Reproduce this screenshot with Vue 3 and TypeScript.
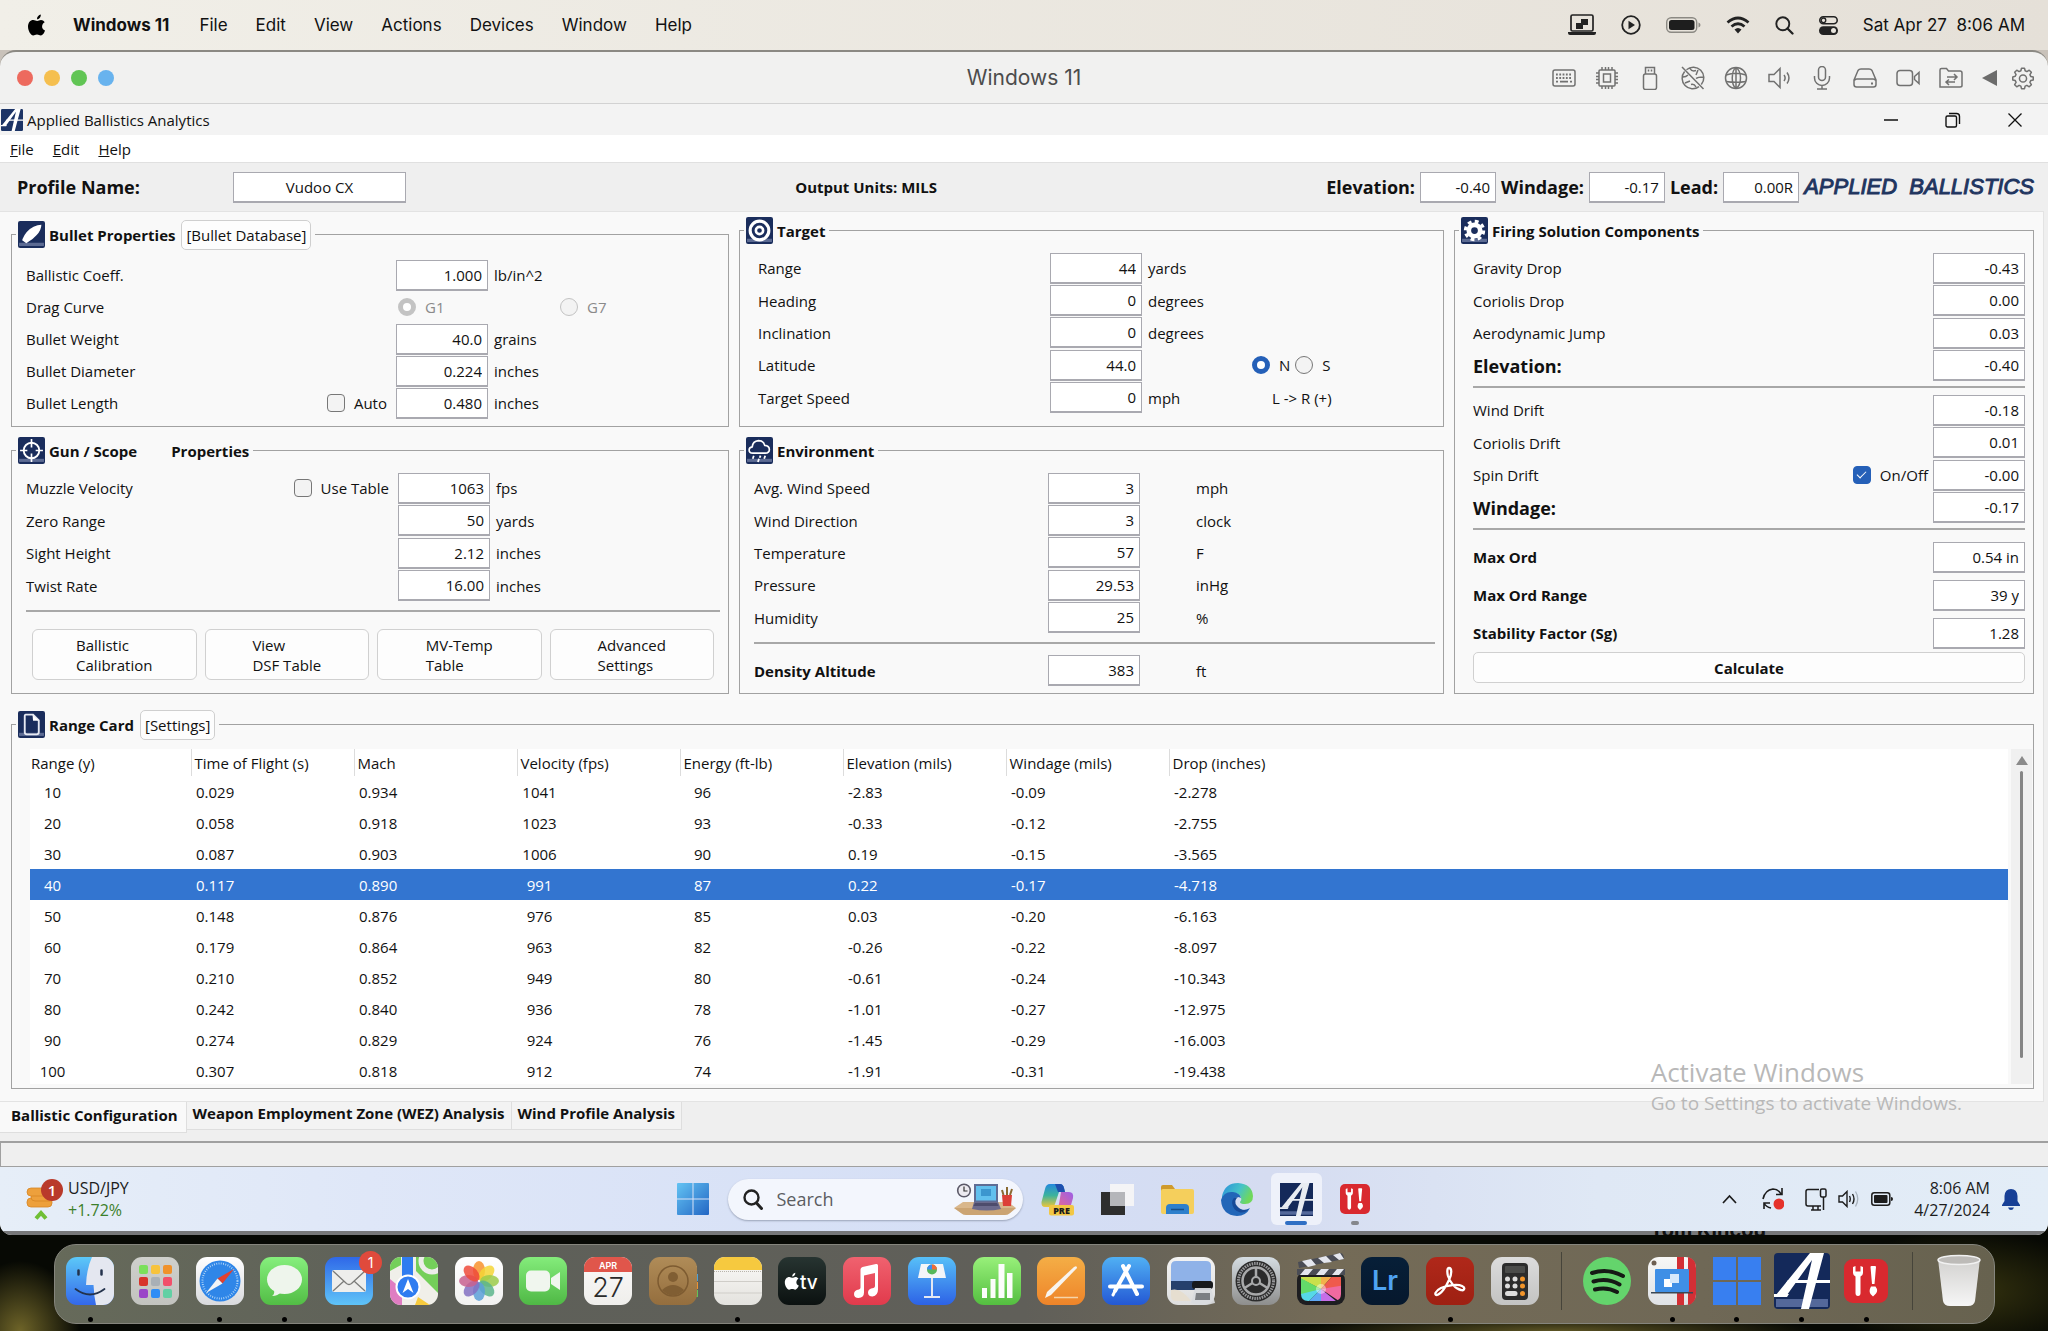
<script setup lang="ts">
import { reactive, ref } from 'vue'

interface Field {
  id: string
  label: string
  value: string
  unit?: string
  strong?: boolean
  large?: boolean
  check?: string
  checked?: boolean
}

const macMenus = ['File', 'Edit', 'View', 'Actions', 'Devices', 'Window', 'Help']
const appMenus = ['File', 'Edit', 'Help']

const profileName = ref('Vudoo CX')
const summary = reactive([
  { id: 'sum-elev', label: 'Elevation:', value: '-0.40' },
  { id: 'sum-wind', label: 'Windage:', value: '-0.17' },
  { id: 'sum-lead', label: 'Lead:', value: '0.00R' },
])

const coeff = ref('1.000')
const bullet = reactive<Field[]>([
  { id: 'b-weight', label: 'Bullet Weight', value: '40.0', unit: 'grains' },
  { id: 'b-diameter', label: 'Bullet Diameter', value: '0.224', unit: 'inches' },
  { id: 'b-length', label: 'Bullet Length', value: '0.480', unit: 'inches', check: 'Auto', checked: false },
])
const gun = reactive<Field[]>([
  { id: 'g-mv', label: 'Muzzle Velocity', value: '1063', unit: 'fps', check: 'Use Table', checked: false },
  { id: 'g-zero', label: 'Zero Range', value: '50', unit: 'yards' },
  { id: 'g-sight', label: 'Sight Height', value: '2.12', unit: 'inches' },
  { id: 'g-twist', label: 'Twist Rate', value: '16.00', unit: 'inches' },
])
const gunButtons = [
  ['Ballistic', 'Calibration'],
  ['View', 'DSF Table'],
  ['MV-Temp', 'Table'],
  ['Advanced', 'Settings'],
]
const target = reactive<Field[]>([
  { id: 't-range', label: 'Range', value: '44', unit: 'yards' },
  { id: 't-heading', label: 'Heading', value: '0', unit: 'degrees' },
  { id: 't-incl', label: 'Inclination', value: '0', unit: 'degrees' },
  { id: 't-lat', label: 'Latitude', value: '44.0', unit: '' },
  { id: 't-speed', label: 'Target Speed', value: '0', unit: 'mph' },
])
const hemisphere = ref('N')
const dragCurve = ref('G1')
const environment = reactive<Field[]>([
  { id: 'e-speed', label: 'Avg. Wind Speed', value: '3', unit: 'mph' },
  { id: 'e-dir', label: 'Wind Direction', value: '3', unit: 'clock' },
  { id: 'e-temp', label: 'Temperature', value: '57', unit: 'F' },
  { id: 'e-press', label: 'Pressure', value: '29.53', unit: 'inHg' },
  { id: 'e-hum', label: 'Humidity', value: '25', unit: '%' },
])
const density = ref('383')
const solution = reactive<{ rows: Field[] }[]>([
  {
    rows: [
      { id: 's-gd', label: 'Gravity Drop', value: '-0.43' },
      { id: 's-cd', label: 'Coriolis Drop', value: '0.00' },
      { id: 's-aj', label: 'Aerodynamic Jump', value: '0.03' },
      { id: 's-el', label: 'Elevation:', value: '-0.40', large: true },
    ],
  },
  {
    rows: [
      { id: 's-wd', label: 'Wind Drift', value: '-0.18' },
      { id: 's-cr', label: 'Coriolis Drift', value: '0.01' },
      { id: 's-sd', label: 'Spin Drift', value: '-0.00', check: 'On/Off', checked: true },
      { id: 's-wi', label: 'Windage:', value: '-0.17', large: true },
    ],
  },
  {
    rows: [
      { id: 's-mo', label: 'Max Ord', value: '0.54 in', strong: true },
      { id: 's-mr', label: 'Max Ord Range', value: '39 y', strong: true },
      { id: 's-sg', label: 'Stability Factor (Sg)', value: '1.28', strong: true },
    ],
  },
])

const columns = ['Range (y)', 'Time of Flight (s)', 'Mach', 'Velocity (fps)', 'Energy (ft-lb)', 'Elevation (mils)', 'Windage (mils)', 'Drop (inches)']
const centred = [0, 3, 4]
const card = [
  ['10', '0.029', '0.934', '1041', '96', '-2.83', '-0.09', '-2.278'],
  ['20', '0.058', '0.918', '1023', '93', '-0.33', '-0.12', '-2.755'],
  ['30', '0.087', '0.903', '1006', '90', '0.19', '-0.15', '-3.565'],
  ['40', '0.117', '0.890', '991', '87', '0.22', '-0.17', '-4.718'],
  ['50', '0.148', '0.876', '976', '85', '0.03', '-0.20', '-6.163'],
  ['60', '0.179', '0.864', '963', '82', '-0.26', '-0.22', '-8.097'],
  ['70', '0.210', '0.852', '949', '80', '-0.61', '-0.24', '-10.343'],
  ['80', '0.242', '0.840', '936', '78', '-1.01', '-0.27', '-12.975'],
  ['90', '0.274', '0.829', '924', '76', '-1.45', '-0.29', '-16.003'],
  ['100', '0.307', '0.818', '912', '74', '-1.91', '-0.31', '-19.438'],
]
const selected = ref('40')

const tabs = ['Ballistic Configuration', 'Weapon Employment Zone (WEZ) Analysis', 'Wind Profile Analysis']
const activeTab = ref(0)

/* artwork on a 24 unit grid for the virtual machine toolbar */
const vmTools = [
  { name: 'Keyboard', art: '<rect x="1" y="4" width="22" height="16" rx="2"/><path d="M4 8.500h16M4 12h16" stroke-dasharray="1.800 1.500" stroke-width="2"/><path d="M4 15.700h2M8 15.700h8M18 15.700h2" stroke-width="1.800"/>' },
  { name: 'Processor', art: '<rect x="4" y="4" width="16" height="16" rx="1"/><rect x="8.500" y="8" width="7" height="8"/><path d="M7 1v3M10.500 1v3M13.500 1v3M17 1v3M7 20v3M10.500 20v3M13.500 20v3M17 20v3M1 7h3M1 10.500h3M1 13.500h3M1 17h3M20 7h3M20 10.500h3M20 13.500h3M20 17h3"/>' },
  { name: 'USB', art: '<rect x="5.500" y="8" width="13" height="15.500" rx="2"/><path d="M7.500 8V1.500h9V8M10.500 3.500v2M13.500 3.500v2"/>' },
  { name: 'Disc', art: '<path d="M5.500 3.700A10.500 10.500 0 0 1 20.300 18.500M18 20.700A10.500 10.500 0 0 1 3.600 5.600M1 1l21.500 22M2 11c3 0 4-1 5-2M9 2.500c1 2 3 3 6 2M22 11c-3 0-5 0-7 1.500M15 21c-1-2-3-3-5-2.500M17 4l-2 5M4 17l5-2"/>' },
  { name: 'Network', art: '<circle cx="12" cy="12" r="10.500"/><path d="M12 1.500C7 5 7 19 12 22.500M12 1.500c6 4 6 17 0 21M2 9c6-2 14-2 20 0M2 15.500c6 1 14 1 20 0M12 1.500v21"/>' },
  { name: 'Sound', art: '<path d="M2 8.500h5l6-6v19l-6-6H2zM17 9c1.500 2 1.500 4 0 6M20 6.500c2.500 3.500 2.500 7.500 0 11"/>' },
  { name: 'Microphone', art: '<rect x="8.500" y="0.500" width="7" height="14" rx="3.500"/><path d="M4.500 10v2a7.500 7.500 0 0 0 15 0v-2M12 19.500v3.500M7 23h10"/>' },
  { name: 'Disk', art: '<path d="M1 14L5 4.500Q6 3 8 3h8q2 0 3 1.500L23 14v4.500q0 2.500-2.500 2.500h-17Q1 21 1 18.500zM1.500 14.500Q2 13 4 13h16q2 0 2.500 1.500"/><path d="M18 17.500h2" stroke-width="2"/>' },
  { name: 'Camera', art: '<rect x="1" y="4.500" width="15.500" height="15" rx="3"/><path d="M18.500 10.500l4.500-4v11l-4.500-4z"/>' },
  { name: 'Shared folders', art: '<path d="M1 21V4q0-1.500 1.500-1.500h5L9.500 5H21q2 0 2 2v12.500q0 1.500-2 1.500zM8 11h10M15 8l3 3-3 3M16 16H7M10 13.500L7 16l3 3"/>' },
]

const gearTeeth = 'M10.300 1.500h3.400l.7 2.900 2 .9 2.600-1.600 2.400 2.400-1.600 2.600.9 2 2.800.7v3.300l-2.800.7-.9 2 1.600 2.600-2.400 2.400-2.600-1.600-2 .9-.7 2.800h-3.400l-.7-2.800-2-.9L5 22.400 2.600 20l1.600-2.600-.9-2-2.800-.7v-3.400l2.800-.7.9-2L2.600 6 5 3.700l2.600 1.600 2-.9z'

const letterA = '<path d="M2 42 36 0h14L35 56h-8L38 7 13 42z"/><path d="M14 27h42v3H12z"/><path d="M0 41h15l-2 3H0z"/>'

const grad = (id: string, a: string, b: string) =>
  `<linearGradient id="${id}" x1="0" y1="0" x2="0" y2="1"><stop offset="0" stop-color="${a}"/><stop offset="1" stop-color="${b}"/></linearGradient>`
const tile = (id: string, a: string, b: string) =>
  `${grad(id, a, b)}<rect width="48" height="48" rx="11" fill="url(#${id})"/>`

const padColors = ['#7be05a', '#f7c33c', '#f0922b', '#d8332a', '#a9b0b6', '#f2506a', '#9a45c8', '#2f8df5', '#62d0a4']
const launchpad = padColors
  .map((c, i) => `<rect x="${8 + (i % 3) * 12}" y="${8 + Math.floor(i / 3) * 12}" width="9" height="9" rx="2" fill="${c}"/>`)
  .join('')
const petalColors = ['#f8922d', '#f4d536', '#9ccb4a', '#5cb58c', '#5b9fd8', '#8270c2', '#c8608f', '#ef4a3a']
const petals = petalColors
  .map((c, i) => `<ellipse cx="24" cy="13.500" rx="6" ry="9.500" fill="${c}" opacity=".85" transform="rotate(${i * 45} 24 24)"/>`)
  .join('')
const toolsArt = '<path d="M11 10v6q0 2 2.500 3.500V36q0 3 2.500 3t2.500-3V19.500Q21 18 21 16v-6l-2.500-1v5.500h-5V9z" fill="#fff"/><path d="M28.500 10q0-1 1-1h3.500q1 0 1 1l-1.500 17h-2.500zM29 29.500h4.500q3 4 .5 7l-3 3-2.500-2.500q-2-3 .5-7.500z" fill="#fff"/>'
const tickMarks = '<circle cx="24" cy="24" r="17.500" fill="none" stroke="#bcdcf8" stroke-width="2" stroke-dasharray=".8 1.500"/>'

interface DockItem {
  name: string
  art: string
  running?: boolean
  badge?: string
  size?: string
}
const dock: DockItem[] = [
  { name: 'Finder', running: true, art: tile('fi', '#5cc8f8', '#3468ea') + '<path d="M26 0h11a11 11 0 0 1 11 11v26a11 11 0 0 1-11 11h-7q-2-9-2.500-20H20Q20.500 12 26 0z" fill="#e4e7f0"/><path d="M12.500 13.500v4M35.500 13.500v4" stroke="#23324c" stroke-width="2.500" stroke-linecap="round"/><path d="M9.500 32q14.500 11 29 0" fill="none" stroke="#23324c" stroke-width="1.800" stroke-linecap="round"/>' },
  { name: 'Launchpad', art: tile('la', '#cfd0cc', '#c2c3bf') + launchpad },
  { name: 'Safari', running: true, art: tile('sa', '#ffffff', '#d9dadd') + '<circle cx="24" cy="24" r="20.500" fill="#2f86e8"/>' + tickMarks + '<path d="M38 12 26.500 26.500 21.500 21.500z" fill="#e2402f"/><path d="M10 36 21.500 21.500 26.500 26.500z" fill="#f2f4f6"/>' },
  { name: 'Messages', running: true, art: tile('me', '#86ef7d', '#52bd45') + '<ellipse cx="24.500" cy="22.500" rx="17.500" ry="14.500" fill="#eef5ec"/><path d="M14 33q1 4-2 6 6 0 9-4z" fill="#eef5ec"/>' },
  { name: 'Mail', running: true, badge: '1', art: tile('ma', '#2f68e8', '#5fc4f8') + '<rect x="7" y="13" width="34" height="22" rx="2" fill="#eeeeec"/><path d="M8 14l13.500 12.500q2.500 2 5 0L40 14M8 34l11-10M40 34L29 24" fill="none" stroke="#7c7c7a" stroke-width="1.300"/>' },
  { name: 'Maps', art: '<clipPath id="mc"><rect width="48" height="48" rx="11"/></clipPath><g clip-path="url(#mc)"><rect width="48" height="48" fill="#f0efe9"/><path d="M0 0h11v8L0 14zM26 0h22v36L26 14z" fill="#74cf5a"/><path d="M12 0h11v26H12z" fill="#2f7cf0"/><path d="M0 22l12 10v16H0z" fill="#df7dc2"/><path d="M28 40l12 8H25z" fill="#f7cb3e"/><circle cx="42" cy="4" r="11" fill="none" stroke="#ececea" stroke-width="5"/></g><circle cx="18" cy="30" r="11.500" fill="#2f7cf0" stroke="#fff" stroke-width="2"/><path d="M18 22l5.500 14-5.500-4-5.500 4z" fill="#fff"/>' },
  { name: 'Photos', art: tile('ph', '#ffffff', '#f1f1f0') + petals },
  { name: 'FaceTime', art: tile('fa', '#84ec7b', '#4fb845') + '<rect x="7" y="13.500" width="24" height="21" rx="5" fill="#f0f6ee"/><path d="M32 21l9-6v18l-9-6z" fill="#f0f6ee"/>' },
  { name: 'Calendar', art: tile('ca', '#fbfaf9', '#efeeeb') + '<path d="M11 0h26a11 11 0 0 1 11 11v4H0v-4A11 11 0 0 1 11 0z" fill="#e0564b"/><text x="24" y="11.500" text-anchor="middle" font-size="9" font-weight="600" fill="#fff">APR</text><text x="24" y="40" text-anchor="middle" font-size="27" fill="#2a2a2a" font-weight="300">27</text>' },
  { name: 'Contacts', art: '<path d="M44 9h4v7h-4z" fill="#d4d4d4"/><path d="M44 17h5v7h-5z" fill="#4ea2d8"/><path d="M44 25h5v7h-5z" fill="#ee9333"/><path d="M44 33h5v7h-5z" fill="#63c35a"/>' + tile('co', '#b08c58', '#946e3e') + '<circle cx="24" cy="24" r="15" fill="none" stroke="#7d5b31" stroke-width="1.500"/><circle cx="24" cy="20" r="5" fill="#805e33"/><path d="M13 33q11-10 22 0-11 11-22 0z" fill="#805e33"/>' },
  { name: 'Notes', running: true, art: tile('no', '#fbfaf8', '#e3e2de') + '<path d="M11 0h26a11 11 0 0 1 11 11v2H0v-2A11 11 0 0 1 11 0z" fill="#f6c93f"/><path d="M0 24.500h48M0 36h48" stroke="#cfcdc8"/><path d="M0 14.500h48" stroke="#b8b4ab" stroke-dasharray="1 1"/>' },
  { name: 'TV', art: tile('tv', '#273431', '#0b1110') + '<path transform="translate(6 15) scale(.82)" d="M14 6c-1.600 0-2.500 1-3.500 1S8 6 6.500 6C3.500 6 1 8.700 1 12.500 1 17 4 21.500 6.200 21.500c1.400 0 2-.9 3.800-.9s2.300.9 3.800.9c2 0 3.700-3 4.200-4.900-4-1.700-3.600-6.800-.3-8.400C16.700 6.700 15.400 6 14 6zM10 5.500C9.800 3 11.700 1 13.800.8 14 3.400 12 5.500 10 5.500z" fill="#fff"/><text x="22" y="32" font-size="19" font-weight="500" fill="#fff">tv</text>' },
  { name: 'Music', art: tile('mu', '#f0626f', '#e13a4c') + '<path d="M17.500 12.500q0-2 2-2.500l13.500-3q2-.5 2 1.500v24q0 6-5.500 7-4.500 0-4.500-4t5.500-4.500q1.500-.5 1.500-2V16l-11 2.500v17q0 5-5.500 5.500-4.500 0-4.500-4t5-4.500q1.500-.5 1.500-2z" fill="#fff"/>' },
  { name: 'Keynote', art: tile('ke', '#57c0f8', '#2d62e6') + '<path d="M13 7h22l3 14H10z" fill="#f3f5f8"/><circle cx="24" cy="12.500" r="5" fill="#55b85a"/><path d="M24 12.500v-5a5 5 0 0 1 5 5z" fill="#ef6a3a"/><path d="M24 12.500h-5a5 5 0 0 1 5-5z" fill="#3a8df0"/><path d="M23 21h2v18h-2zM16 39h16v2H16z" fill="#e3e8f2"/>' },
  { name: 'Numbers', art: tile('nu', '#98f07a', '#54be40') + '<path d="M9 31h5v10H9zM17.500 22h5v19h-5zM25.500 7h6v34h-6zM34 16h5.500v25H34z" fill="#fbfdfa"/>' },
  { name: 'Pages', art: tile('pa', '#f4ae46', '#ee8429') + '<path d="M37 10q3-2 3 1L14 38l-6 3 2-6z" fill="#f8f4ee"/><path d="M17 40.500h24" stroke="#f6d4a8" stroke-width="1.500"/>' },
  { name: 'App Store', art: tile('as', '#50b0f4', '#2458d4') + '<path d="M21 9l14 28M27 9L13 34M8 29.500h32" stroke="#fff" stroke-width="4" stroke-linecap="round"/><path d="M12 36l-1 2" stroke="#fff" stroke-width="3" stroke-linecap="round"/>' },
  { name: 'Preview', art: tile('pr', '#f3f3f3', '#dedede') + '<path d="M9 4h30q5 0 5 5v16H4V9q0-5 5-5z" fill="#8fb2e8"/><path d="M4 24h40v9H4z" fill="#26406c"/><path d="M4 33q10-3 20 11H9q-5 0-5-5z" fill="#e6ded0"/><rect x="25" y="24" width="21" height="8" rx="3" fill="#17191c"/><path d="M28 31h16l4 15q-12 4-24 0z" fill="#d9dcdf" opacity=".93"/><path d="M29 36h14v7H28z" fill="#7d8084"/>' },
  { name: 'System Settings', art: tile('ss', '#d5dde2', '#8e8e8d') + '<circle cx="24" cy="24" r="20.500" fill="#2b2b2b"/><circle cx="24" cy="24" r="17.500" fill="none" stroke="#97989a" stroke-width="3" stroke-dasharray="1.500 1"/><circle cx="24" cy="24" r="13.500" fill="none" stroke="#a8a9aa" stroke-width="2.500"/><circle cx="24" cy="24" r="4" fill="none" stroke="#a8a9aa" stroke-width="2"/><path d="M24 20V11M27.500 26l8 5M20.500 26l-8 5" stroke="#a8a9aa" stroke-width="2.500"/>' },
  { name: 'Final Cut Pro', art: '<rect y="14" width="48" height="34" rx="9" fill="#1d1d20"/><clipPath id="fc"><path d="M4 20h40v17q0 7-7 7H11q-7 0-7-7z"/></clipPath><g clip-path="url(#fc)"><path d="M24 32L0 20v-4h24z" fill="#c9e04c"/><path d="M24 32V16h14z" fill="#f2b04a"/><path d="M24 32L38 16h10v14z" fill="#ef5a4c"/><path d="M24 32l24-4v20z" fill="#f06aa0"/><path d="M24 32l20 16H24z" fill="#c66ee8"/><path d="M24 32v16H8z" fill="#5fa8f4"/><path d="M24 32L8 48H0V36z" fill="#56d8e8"/><path d="M24 32L0 38V19z" fill="#63db6a"/><circle cx="24" cy="32" r="5" fill="#fff" opacity=".45"/></g><path d="M0 12h48v6H0z" fill="#4a4c55"/><path d="M3 18l5-6h8l-5 6zM19 18l5-6h8l-5 6zM35 18l5-6h7l-5 6z" fill="#e5e7ee"/><path d="M1 5L44-4q3 1 3 6L2 11z" fill="#4a4c55"/><path d="M5 4l9-2 5 6-8 2zM21 1l8-2 6 6-8 1zM36-2l7-2 4 6-5 1z" fill="#e5e7ee"/>' },
  { name: 'Lightroom', art: tile('lr', '#071f38', '#06182d') + '<text x="24" y="33" text-anchor="middle" font-size="27" font-weight="600" fill="#4fa3f2">Lr</text>' },
  { name: 'Acrobat', running: true, art: tile('ac', '#b0281a', '#9e2012') + '<path d="M23 11c3 0 3 6 0 12-3 7-8 14-12 15-3 0-2-4 4-7 7-3 17-4 21-2 4 2 2 5-1 4-6-1-11-8-13-14-1-4-1-8 1-8z" fill="none" stroke="#fff" stroke-width="2.300"/>' },
  { name: 'Calculator', art: tile('cl', '#dcdcdc', '#c3c3c2') + '<rect x="11" y="6" width="26" height="37" rx="4" fill="#2c2c2c"/><rect x="14" y="9" width="20" height="7" rx="1" fill="#4b4c4a"/><g fill="#ddd"><circle cx="16.500" cy="22" r="2.500"/><circle cx="24" cy="22" r="2.500"/><circle cx="16.500" cy="29" r="2.500"/><circle cx="24" cy="29" r="2.500"/><rect x="14" y="34" width="12.500" height="5" rx="2.500"/></g><g fill="#f2952b"><circle cx="31.500" cy="22" r="2.500"/><circle cx="31.500" cy="29" r="2.500"/><circle cx="31.500" cy="36.500" r="2.500"/></g>' },
  { name: 'separator', art: '' },
  { name: 'Spotify', art: '<circle cx="24" cy="24" r="24" fill="#64d46c"/><path d="M9 16q16-5 31 3M10.500 24.500q14-4 26 3M12 32.500q12-3 22 2.500" fill="none" stroke="#151a15" stroke-width="4" stroke-linecap="round"/>' },
  { name: 'Parallels', running: true, art: tile('pl', '#f7f7f6', '#dfe2e6') + '<path d="M29 0h7v48h-7zM40 0q8 2 8 11v26q0 9-8 11z" fill="#d32f35"/><circle cx="6" cy="6" r="2.500" fill="#6d5f52"/><rect x="7" y="12" width="34" height="23" rx="1" fill="#3f8fe6"/><path d="M3 35h42v1.500H3z" fill="#3b4754"/><rect x="16" y="22" width="8" height="8" fill="#fff"/><rect x="22" y="17" width="9" height="9" fill="#d6e8fb"/>' },
  { name: 'Windows 11', running: true, art: '<path d="M0 0h23v23H0zM25 0h23v23H25zM0 25h23v23H0zM25 25h23v23H25z" fill="#387ff0"/>' },
  { name: 'Applied Ballistics', running: true, size: 'big', art: `<g transform="scale(.857)"><rect width="56" height="56" rx="4" fill="#14295a"/><path d="M2 46h52v8H2z" fill="#54689a"/><g fill="#fff">${letterA}</g></g>` },
  { name: 'Parallels Toolbox', running: true, art: '<rect x="2" y="2" width="44" height="44" rx="9" fill="#d9292f"/>' + toolsArt },
  { name: 'separator', art: '' },
  { name: 'Trash', art: grad('tr', '#d2d1cf', '#f6f6f6') + '<path d="M3 2h42l-5 42q-1 5-7 5H15q-6 0-7-5z" fill="url(#tr)"/><ellipse cx="24" cy="3" rx="21" ry="4.500" fill="#bdbbb8" stroke="#f1f1f1" stroke-width="1.500"/>' },
]
</script>

<template>
  <div class="desktop">
    <header class="mac-bar">
      <svg class="apple" viewBox="0 0 19 22"><path d="M14 6c-1.600 0-2.500 1-3.800 1S7.800 6 6.300 6C3.300 6 1 8.700 1 12.500 1 17 4 21.500 6.200 21.500c1.400 0 2-.9 3.800-.9s2.300.9 3.800.9c2 0 3.700-3 4.200-4.900-4-1.700-3.600-6.800-.3-8.400C16.700 6.700 15.400 6 14 6zM10 5.300C9.800 3 11.700.8 13.800.5 14 3.200 12 5.300 10 5.300z" fill="#000" /></svg>
      <b>Windows 11</b>
      <nav class="mac-menus"><a v-for="m in macMenus" :key="m" href="#">{{ m }}</a></nav>
      <div class="mac-status">
        <svg width="28" height="22" viewBox="0 0 28 22"><rect x="3" y="1" width="22" height="16" rx="1.500" fill="none" stroke="#222" stroke-width="1.700" /><path d="M0 18h28v1q0 2-2 2H2q-2 0-2-2zM8 9h7v6H8zM13 5h7v6h-7z" fill="#222" /></svg>
        <svg width="20" height="20" viewBox="0 0 20 20"><circle cx="10" cy="10" r="8.800" fill="none" stroke="#222" stroke-width="1.800" /><path d="M7.500 5.800l6.500 4.200-6.500 4.200z" fill="#222" /></svg>
        <svg width="35" height="16" viewBox="0 0 35 16"><rect x=".7" y=".7" width="30" height="14.600" rx="4.500" fill="none" stroke="#8b8983" stroke-width="1.400" /><rect x="3" y="3" width="25.500" height="10" rx="2.500" fill="#1e1e1e" /><path d="M32.500 5.500q2 .8 2 2.500t-2 2.500z" fill="#8b8983" /></svg>
        <svg width="24" height="18" viewBox="0 0 24 18"><path d="M1.500 6.500Q12-2.500 22.500 6.500M5.500 10.500q6.500-5.500 13 0" fill="none" stroke="#222" stroke-width="2.800" /><path d="M8.500 13.500q3.500-3 7 0L12 17.500z" fill="#222" /></svg>
        <svg width="19" height="19" viewBox="0 0 19 19"><circle cx="7.800" cy="7.800" r="6.500" fill="none" stroke="#222" stroke-width="1.900" /><path d="M12.500 12.500l5 5" stroke="#222" stroke-width="2.300" stroke-linecap="round" /></svg>
        <svg width="19" height="19" viewBox="0 0 19 19"><rect x=".8" y=".8" width="17.400" height="7" rx="3.500" fill="none" stroke="#222" stroke-width="1.600" /><circle cx="4.500" cy="4.300" r="2.300" fill="none" stroke="#222" stroke-width="1.300" /><rect x="0" y="10.300" width="19" height="8.700" rx="4.300" fill="#222" /><circle cx="14.500" cy="14.600" r="2.500" fill="#e8e5de" /></svg>
        <span class="clock">Sat Apr 27&nbsp; 8:06 AM</span>
      </div>
    </header>

    <main class="vm">
      <div class="vm-bar">
        <div class="lights"><button v-for="c in ['close', 'minimise', 'zoom', 'coherence']" :key="c" :class="c" :aria-label="c"></button></div>
        <span class="vm-title">Windows 11</span>
        <div class="vm-tools">
          <button v-for="t in vmTools" :key="t.name" class="bare" :aria-label="t.name"><svg width="24" height="24" viewBox="0 0 24 24" fill="none" stroke="#717170" stroke-width="1.500" v-html="t.art"></svg></button>
          <button class="bare collapse" aria-label="Collapse"><svg width="15" height="16" viewBox="0 0 15 16"><path d="M0 8L15 0v16z" fill="#6c6c6b" /></svg></button>
          <button class="bare" aria-label="Settings"><svg width="24" height="24" viewBox="-1 -1 26 27" fill="none" stroke="#717170" stroke-width="1.700" stroke-linejoin="round"><path :d="gearTeeth" /><circle cx="12" cy="13" r="4" /></svg></button>
        </div>
      </div>

      <div class="app">
        <div class="title-bar">
          <svg width="22" height="22" viewBox="0 0 56 56"><rect width="56" height="56" rx="3" fill="#1c3466" /><g fill="#fff" v-html="letterA"></g></svg>
          <span>Applied Ballistics Analytics</span>
          <div class="win-buttons">
            <button class="bare" aria-label="Minimize"><svg width="16" height="16" viewBox="0 0 16 16"><path d="M1 8h14" stroke="#111" stroke-width="1.500" /></svg></button>
            <button class="bare" aria-label="Restore"><svg width="16" height="16" viewBox="0 0 16 16" fill="none" stroke="#111" stroke-width="1.400"><rect x="1" y="4" width="10.500" height="11" rx="1.500" /><path d="M4 1.500h7.500q3 0 3 3V12" /></svg></button>
            <button class="bare" aria-label="Close"><svg width="16" height="16" viewBox="0 0 16 16"><path d="M1.500 1.500l13 13M14.500 1.500l-13 13" stroke="#111" stroke-width="1.300" /></svg></button>
          </div>
        </div>
        <nav class="menu-bar"><a v-for="m in appMenus" :key="m" href="#"><u>{{ m[0] }}</u>{{ m.slice(1) }}</a></nav>

        <div class="profile">
          <label class="large" for="profile">Profile Name:</label>
          <input id="profile" v-model="profileName" class="name-box" type="text" />
          <strong class="units">Output Units: MILS</strong>
          <div class="summary">
            <template v-for="s in summary" :key="s.id">
              <label class="large" :for="s.id">{{ s.label }}</label>
              <input :id="s.id" v-model="s.value" type="text" />
            </template>
            <span class="brand">APPLIED&nbsp; BALLISTICS</span>
          </div>
        </div>

        <section class="page">
          <div class="groups">
            <fieldset class="bullet">
              <legend>
                <svg class="gi" viewBox="0 0 26 26"><rect width="26" height="26" rx="2" fill="#1a2d5c" /><path d="M1 21h24v3H1z" fill="#5c6b93" /><path d="M4.500 17Q8 9 15 5.500q4-2 7.500-2 0 5-4.500 10-4 4.500-8 6.500l-2 1.500-4-3z" fill="#fff" /></svg>
                <b>Bullet Properties</b><button class="link-btn">[Bullet Database]</button>
              </legend>
              <div class="rows five-tight">
                <div class="row">
                  <label for="b-coeff">Ballistic Coeff.</label>
                  <input id="b-coeff" v-model="coeff" type="text" /><span class="unit">lb/in^2</span>
                </div>
                <div class="row drag">
                  <span>Drag Curve</span>
                  <label><input v-model="dragCurve" type="radio" name="drag" value="G1" disabled />G1</label>
                  <label><input v-model="dragCurve" type="radio" name="drag" value="G7" disabled />G7</label>
                </div>
                <div v-for="f in bullet" :key="f.id" class="row">
                  <label :for="f.id">{{ f.label }}</label>
                  <label v-if="f.check" class="opt"><input v-model="f.checked" type="checkbox" />{{ f.check }}</label>
                  <input :id="f.id" v-model="f.value" type="text" /><span class="unit">{{ f.unit }}</span>
                </div>
              </div>
            </fieldset>

            <fieldset class="target">
              <legend>
                <svg class="gi" viewBox="0 0 26 26"><rect width="26" height="26" rx="2" fill="#1a2d5c" /><path d="M1 21h24v3H1z" fill="#5c6b93" /><circle cx="13" cy="13" r="9" fill="#1a2d5c" stroke="#fff" stroke-width="3" /><circle cx="13" cy="13" r="3.500" fill="none" stroke="#fff" stroke-width="2.500" /></svg>
                <b>Target</b>
              </legend>
              <div class="rows five">
                <div v-for="f in target" :key="f.id" class="row">
                  <label :for="f.id">{{ f.label }}</label>
                  <input :id="f.id" v-model="f.value" type="text" />
                  <span class="unit">{{ f.unit }}</span>
                  <span v-if="f.id === 't-lat'" class="side">
                    <label><input v-model="hemisphere" type="radio" name="hemi" value="N" />N</label>
                    <label><input v-model="hemisphere" type="radio" name="hemi" value="S" />S</label>
                  </span>
                  <span v-else class="side note">{{ f.id === 't-speed' ? 'L -&gt; R (+)' : '' }}</span>
                </div>
              </div>
            </fieldset>

            <fieldset class="solution">
              <legend>
                <svg class="gi" viewBox="0 0 26 26"><rect width="26" height="26" rx="2" fill="#1a2d5c" /><path d="M1 21h24v3H1z" fill="#5c6b93" /><circle cx="13" cy="13" r="5.500" fill="none" stroke="#fff" stroke-width="4.500" /><circle cx="13" cy="13" r="8.800" fill="none" stroke="#fff" stroke-width="3" stroke-dasharray="3.700 3.210" /></svg>
                <b>Firing Solution Components</b>
              </legend>
              <template v-for="(g, i) in solution" :key="i">
                <hr v-if="i" />
                <div class="rows" :class="i === 2 ? 'three' : 'four'">
                  <div v-for="f in g.rows" :key="f.id" class="row">
                    <label :for="f.id" :class="{ strong: f.strong, large: f.large }">{{ f.label }}</label>
                    <label v-if="f.check" class="opt"><input v-model="f.checked" type="checkbox" />{{ f.check }}</label>
                    <input :id="f.id" v-model="f.value" type="text" />
                  </div>
                </div>
              </template>
              <button class="wide">Calculate</button>
            </fieldset>

            <fieldset class="gun">
              <legend>
                <svg class="gi" viewBox="0 0 26 26"><rect width="26" height="26" rx="2" fill="#1a2d5c" /><path d="M1 21h24v3H1z" fill="#5c6b93" /><circle cx="13" cy="13" r="7.500" fill="none" stroke="#fff" stroke-width="1.800" /><path d="M13 2v8M13 16v8M2 13h7M17 13h7" stroke="#fff" stroke-width="1.600" /></svg>
                <b>Gun / Scope</b><b class="second">Properties</b>
              </legend>
              <div class="rows four">
                <div v-for="f in gun" :key="f.id" class="row">
                  <label :for="f.id">{{ f.label }}</label>
                  <label v-if="f.check" class="opt"><input v-model="f.checked" type="checkbox" />{{ f.check }}</label>
                  <input :id="f.id" v-model="f.value" type="text" /><span class="unit">{{ f.unit }}</span>
                </div>
              </div>
              <hr />
              <div class="actions">
                <button v-for="b in gunButtons" :key="b[0]"><span>{{ b[0] }}<br />{{ b[1] }}</span></button>
              </div>
            </fieldset>

            <fieldset class="environment">
              <legend>
                <svg class="gi" viewBox="0 0 26 26"><rect width="26" height="26" rx="2" fill="#1a2d5c" /><path d="M1 21h24v3H1z" fill="#5c6b93" /><path d="M6.500 15.500q-3.500 0-3.500-3 0-2.500 3-3 .5-5.500 6-6 5 0 6 4.500 4.500.5 4.500 4 0 3.500-4 3.500z" fill="none" stroke="#fff" stroke-width="1.600" /><path d="M7.500 18l-1 3M12.500 21l-1 3M14 18l-.8 2M18.500 18l-1 3" stroke="#fff" stroke-width="1.700" /></svg>
                <b>Environment</b>
              </legend>
              <div class="rows five">
                <div v-for="f in environment" :key="f.id" class="row">
                  <label :for="f.id">{{ f.label }}</label>
                  <input :id="f.id" v-model="f.value" type="text" /><span class="unit">{{ f.unit }}</span>
                </div>
              </div>
              <hr />
              <div class="row">
                <label for="density" class="strong">Density Altitude</label>
                <input id="density" v-model="density" type="text" /><span class="unit">ft</span>
              </div>
            </fieldset>
          </div>

          <fieldset class="card">
            <legend>
              <svg class="gi" viewBox="0 0 26 26"><rect width="26" height="26" rx="2" fill="#1a2d5c" /><path d="M1 21h24v3H1z" fill="#5c6b93" /><path d="M7 3.500h7.500L20 9v11.500q0 2-2 2H8.500q-2 0-2-2V5q0-1.500 1-1.500z" fill="none" stroke="#e6e9f2" stroke-width="1.800" /><path d="M14 3.500L20 9.500h-5.500z" fill="#fff" /></svg>
              <b>Range Card</b><button class="link-btn">[Settings]</button>
            </legend>
            <div class="card-body">
              <div class="table-clip">
                <table>
                  <thead><tr><th v-for="c in columns" :key="c" scope="col">{{ c }}</th><th></th></tr></thead>
                  <tbody>
                    <tr v-for="r in card" :key="r[0]" :class="{ selected: r[0] === selected }" @click="selected = r[0]">
                      <td v-for="(c, i) in r" :key="i"><span :class="{ mid: centred.includes(i) }">{{ c }}</span></td>
                      <td></td>
                    </tr>
                  </tbody>
                </table>
              </div>
              <div class="scroll"><svg width="12" height="9" viewBox="0 0 12 9"><path d="M6 0l6 9H0z" fill="#8a8a8a" /></svg><i></i></div>
            </div>
          </fieldset>
        </section>

        <div class="tabs" role="tablist">
          <button v-for="(t, i) in tabs" :key="t" role="tab" :class="{ active: i === activeTab }" @click="activeTab = i">{{ t }}</button>
        </div>
        <div class="status"></div>

        <div class="watermark"><p>Activate Windows</p><span>Go to Settings to activate Windows.</span></div>
      </div>

      <footer class="taskbar">
        <div class="widget">
          <svg width="38" height="42" viewBox="0 0 38 42">
            <g fill="#eda03c" stroke="#d78523" stroke-width=".8"><rect x="1" y="20" width="25" height="9" rx="4" /><rect x="5" y="15" width="23" height="8" rx="4" /><rect x="1" y="10" width="24" height="8" rx="4" /></g>
            <path d="M10 40.500l5-5.500 5 5.500" fill="none" stroke="#6fbf36" stroke-width="4" />
            <circle cx="26" cy="12" r="11" fill="#b93a2b" /><text x="26" y="18" text-anchor="middle" font-size="15" font-weight="600" fill="#fff">1</text>
          </svg>
          <div><p>USD/JPY</p><p class="up">+1.72%</p></div>
        </div>
        <div class="pinned">
          <button class="bare" aria-label="Start"><svg width="32" height="32" viewBox="0 0 32 32"><linearGradient id="st" x1="0" y1="0" x2="1" y2="1"><stop offset="0" stop-color="#63c3f3" /><stop offset="1" stop-color="#2366c4" /></linearGradient><path d="M0 1q0-1 1-1h14.500v15.500H0zM16.500 0H31q1 0 1 1v14.500H16.500zM0 16.500h15.500V32H1q-1 0-1-1zM16.500 16.500H32V31q0 1-1 1H16.500z" fill="url(#st)" /></svg></button>
          <label class="search">
            <svg width="20" height="21" viewBox="0 0 20 21"><circle cx="8.500" cy="8.500" r="7" fill="none" stroke="#222" stroke-width="2.400" /><path d="M13.500 14l5 5.500" stroke="#222" stroke-width="3" stroke-linecap="round" /></svg>
            <input type="text" placeholder="Search" aria-label="Search" />
            <svg width="62" height="32" viewBox="0 0 62 32"><path d="M0 25l9-6h45l8 6-6 5q-2 2-5 2H12q-3 0-5-2z" fill="#d9b78c" /><path d="M0 25h62l-6 5q-2 2-5 2H12q-3 0-5-2z" fill="#c29762" opacity=".6" /><circle cx="10" cy="7.500" r="6.300" fill="#eceaf0" stroke="#5b5968" stroke-width="1.600" /><path d="M10 3.500v4.500h3.500" fill="none" stroke="#333" stroke-width="1.200" /><path d="M20 1h24v18H20z" fill="#5f6d95" /><path d="M22 3h20v14.500H22z" fill="#62c0ee" /><path d="M27 6h10v7H27z" fill="#3c96cf" /><path d="M20 19h24l3 7q-14 3-29 0z" fill="#6b6a8c" /><path d="M21 20h22l1.500 3h-25z" fill="#4d4c6c" /><path d="M48 12h10l-1 11h-8z" fill="#dc4038" /><path d="M49.500 12L48 7M53 12V4M56 12l2-6" stroke="#8a6a32" stroke-width="2" /></svg>
          </label>
          <button class="bare" aria-label="Copilot"><svg width="33" height="33" viewBox="0 0 33 33"><linearGradient id="cp" x1="0" y1="0" x2="0" y2="1"><stop offset="0" stop-color="#2489dd" /><stop offset=".5" stop-color="#3cb39c" /><stop offset="1" stop-color="#ecc63a" /></linearGradient><linearGradient id="cq" x1="1" y1="0" x2="0" y2="1"><stop offset="0" stop-color="#9b5fe8" /><stop offset="1" stop-color="#ef6a8a" /></linearGradient><path d="M9 1h10q3 0 4 4l1 4h-6l-4 12q-1 3-4 3H4q-4 0-3.500-5L4 6q1-5 5-5z" fill="url(#cp)" /><path d="M14 1h5q3 0 4 4l1 4h-7z" fill="#1e4fae" /><path d="M20 9h8q5 0 4 6l-2 7q-1 4-5 4H14q3-1 4-5z" fill="url(#cq)" /><rect x="8" y="22" width="25" height="10.500" rx="2" fill="#f2c744" /><text x="20.500" y="30.500" text-anchor="middle" font-size="9" font-weight="800" fill="#1b1b1b">PRE</text></svg></button>
          <button class="bare" aria-label="Task view"><svg width="33" height="33" viewBox="0 0 33 33"><path d="M0 9h24v23H0z" fill="#2e2e2e" /><path d="M9 1h24v22H9z" fill="#f4f4f6" /><path d="M9 9h15v14H9z" fill="#b5b6ba" /></svg></button>
          <button class="bare" aria-label="File Explorer"><svg width="33" height="31" viewBox="0 0 33 31"><path d="M0 3q0-2 2-2h9l3 4v5H0z" fill="#cf9a2c" /><rect y="5" width="33" height="25" rx="2" fill="#f5cf5c" /><path d="M5 30v-6q0-4 4-4h15q4 0 4 4v6z" fill="#2e80cc" /><path d="M10 25.500h13" stroke="#174f8a" stroke-width="1.500" /></svg></button>
          <button class="bare" aria-label="Edge"><svg width="32" height="33" viewBox="0 0 32 33"><linearGradient id="ed" x1="0" y1="0" x2="1" y2=".4"><stop offset="0" stop-color="#2b8fdc" /><stop offset=".6" stop-color="#45c3c8" /><stop offset="1" stop-color="#6fd85c" /></linearGradient><path d="M1 13Q4 0 17 0q14 1 15 13 0 8-8 8-5 0-5-2 2-2 1-5-2-4-7-4-8 0-12 8z" fill="url(#ed)" /><path d="M0 17q3-9 12-8 7 1 8 6-6-3-7 3 0 9 9 9 4 0 7-2-4 8-13 8Q1 32 0 17z" fill="#2266b8" /><path d="M11 20q0-6 6-6-5 4-1 9 5 6 12 3-5 5-10 3-6-2-7-9z" fill="#174a98" /></svg></button>
          <button class="bare current" aria-label="Applied Ballistics"><svg width="33" height="33" viewBox="0 0 56 56"><rect width="56" height="56" fill="#14295a" /><path d="M0 48h56v6H0z" fill="#54689a" /><g fill="#e8ecf2" v-html="letterA"></g></svg></button>
          <button class="bare running" aria-label="Toolbox"><svg width="30" height="30" viewBox="3 3 42 42"><rect x="3" y="3" width="42" height="42" rx="7" fill="#d9292f" /><g v-html="toolsArt"></g></svg></button>
        </div>
        <div class="tray">
          <svg width="15" height="10" viewBox="0 0 15 10"><path d="M1 9l6.500-7L14 9" fill="none" stroke="#1c1c1c" stroke-width="1.700" /></svg>
          <svg class="sync" width="22" height="24" viewBox="0 0 22 24"><path d="M1 12Q3 3 11 2q5 0 8 5M20 1v6.500h-6M9 21q-5-1-7-5M2 22v-6h6" fill="none" stroke="#1c1c1c" stroke-width="1.600" /><circle cx="17" cy="17" r="5.500" fill="#e5322b" /></svg>
          <div class="trio">
            <svg width="22" height="23" viewBox="0 0 22 23"><path d="M14 1.500H3q-2 0-2 2V16q0 2 2 2h13M6 22h10M8 18v4M13 18v4" fill="none" stroke="#1c1c1c" stroke-width="1.500" /><rect x="15.500" y="1" width="5.500" height="8" rx="1.500" fill="none" stroke="#1c1c1c" stroke-width="1.500" /><path d="M18.500 9v13" stroke="#1c1c1c" stroke-width="1.500" /></svg>
            <svg width="22" height="18" viewBox="0 0 22 18"><path d="M1 6h3.500L9 1.500v15L4.500 12H1zM11.500 6q1.500 3 0 6M14.500 4q3 5 0 10" fill="none" stroke="#1c1c1c" stroke-width="1.400" /><path d="M17.500 1.500q4.500 7 0 15" fill="none" stroke="#a9b3bd" stroke-width="1.300" /></svg>
            <svg width="22" height="14" viewBox="0 0 22 14"><rect x=".8" y=".8" width="18" height="12.400" rx="2.500" fill="none" stroke="#1c1c1c" stroke-width="1.500" /><rect x="3" y="3" width="13.500" height="8" rx="1" fill="#1c1c1c" /><path d="M20 5q2 0 2 2t-2 2z" fill="#1c1c1c" /></svg>
          </div>
          <div class="when"><p>8:06 AM</p><p>4/27/2024</p></div>
          <svg width="18" height="21" viewBox="0 0 18 21"><path d="M9 0q6 0 6.500 7v5l2.500 4v1H0v-1l2.500-4V7Q3 0 9 0z" fill="#173f96" /><path d="M6 18.500h6q-1 2.500-3 2.500t-3-2.500z" fill="#173f96" /></svg>
        </div>
      </footer>
      <div class="behind"><b>Tom Kincou</b></div>
    </main>

    <nav class="dock">
      <template v-for="(d, i) in dock" :key="i">
        <hr v-if="d.name === 'separator'" />
        <button v-else class="bare" :class="d.size" :aria-label="d.name">
          <svg viewBox="0 0 48 48" overflow="visible" v-html="d.art"></svg>
          <span v-if="d.badge" class="badge">{{ d.badge }}</span>
          <i v-if="d.running"></i>
        </button>
      </template>
    </nav>
  </div>
</template>

<style>
body { margin: 0; background: #0b0d06; }
</style>

<style scoped>
* { box-sizing: border-box; }
p { margin: 0; }
button, input { font: inherit; color: inherit; }
a { color: inherit; text-decoration: none; }
.bare { display: flex; align-items: center; justify-content: center; padding: 0; border: 0; background: none; position: relative; }

.desktop {
  min-height: 100vh;
  display: flex;
  flex-direction: column;
  font-family: Inter, "Liberation Sans", sans-serif;
  background:
    radial-gradient(ellipse 60px 70px at 20px 100%, #6e6428, transparent),
    radial-gradient(ellipse 140px 60px at 96% 97%, #35330f, transparent),
    radial-gradient(ellipse 260px 16px at 76% 100%, #5c5424, transparent),
    linear-gradient(#c9c2ba 70px, #070904 70px);
}

/* system menu bar */
.mac-bar {
  height: 50px;
  display: flex;
  align-items: center;
  padding: 0 23px 0 27px;
  font-size: 17px;
  color: #111;
  background: linear-gradient(90deg, #f1efe8, #e5e0d8);
}
.apple { width: 19px; height: 22px; margin-right: 27px; }
.mac-menus { display: flex; gap: 28px; margin-left: 30px; }
.mac-status { display: flex; align-items: center; gap: 25px; margin-left: auto; }

/* virtual machine window */
.vm { border-top: 2px solid #8b8983; border-radius: 16px 16px 12px 12px; overflow: hidden; background: #f1f1f0; }
.vm-bar { height: 52px; display: grid; grid-template-columns: 1fr auto 1fr; align-items: center; padding: 0 13px; border-bottom: 1px solid #d2d2d2; }
.lights { display: flex; gap: 11px; padding-left: 4px; }
.lights button { width: 16px; height: 16px; padding: 0; border: 0; border-radius: 50%; }
.close { background: #ed6a5e; }
.minimise { background: #f5bf4f; }
.zoom { background: #61c554; }
.coherence { background: #68b3ee; }
.vm-title { font-size: 21px; color: #4c4c4c; }
.vm-tools { display: flex; justify-content: flex-end; gap: 19px; }
.collapse { margin-right: -5px; }

/* application */
.app { position: relative; font-family: "Open Sans", "Noto Sans", sans-serif; font-size: 15px; line-height: 20px; color: #111; background: #efefef; }
.title-bar { height: 31px; display: flex; align-items: center; gap: 4px; padding: 0 2px 0 1px; background: #f3f3f3; }
.win-buttons { display: flex; margin-left: auto; }
.win-buttons button { width: 62px; height: 30px; }
.menu-bar { height: 28px; display: flex; align-items: center; gap: 19px; padding-left: 10px; background: #fff; border-bottom: 1px solid #e0e0e0; }
.profile { height: 48px; display: grid; grid-template-columns: 216px 173px 1fr auto; align-items: center; padding: 0 14px 0 17px; }
.large { font-size: 18px; font-weight: 700; }
.strong { font-weight: 700; }
.units { text-align: center; }
.summary { display: flex; align-items: center; gap: 5px; }
.summary input { width: 76px; }
.brand { font-family: "Liberation Sans", sans-serif; font-size: 22px; font-style: italic; color: #1f355f; -webkit-text-stroke: 1px #1f355f; }

input[type="text"] { height: 31px; min-width: 0; padding: 0 5px; border: 1px solid #a9a9b0; border-bottom-width: 2px; background: #fff; text-align: right; outline: 0; }
.name-box[type="text"] { text-align: center; }
input[type="checkbox"], input[type="radio"] { appearance: none; flex: none; width: 18px; height: 18px; margin: 0; border: 1px solid #777; background: #f3f3f3; }
input[type="checkbox"] { border-radius: 4px; display: grid; place-items: center; }
input[type="checkbox"]:checked { background: #2560b8; border-color: #2560b8; }
input[type="checkbox"]:checked::after { content: ""; width: 8px; height: 4px; margin-top: -3px; border-left: 1px solid #fff; border-bottom: 1px solid #fff; transform: rotate(-45deg); }
input[type="radio"] { border-radius: 50%; }
input[type="radio"]:checked { border: 5px solid #2560b8; background: #fff; }
input[type="radio"]:disabled { border-color: #c3c3c3; }

.page { margin-right: 4px; padding: 5px 9px 12px 11px; background: #f9f9f9; border: solid #e3e3e3; border-width: 1px 1px 1px 0; }
.groups {
  display: grid;
  grid-template-columns: 718fr 705fr 580fr;
  grid-template-areas: "bullet target solution" "gun environment solution";
  gap: 10px;
}
fieldset { min-width: 0; margin: 0; padding: 8px 8px 7px 14px; border: 1px solid #a2a2a2; }
legend { display: flex; align-items: center; height: 27px; margin-left: -10px; padding: 0 4px 0 2px; }
.gi { width: 27px; height: 27px; margin-right: 4px; }
.link-btn { height: 30px; margin-left: 6px; padding: 0 4px; border: 1px solid #cfcfcf; border-radius: 5px; background: #fdfdfd; }
.second { margin-left: 34px; }
.bullet { grid-area: bullet; margin-top: 4px; padding-top: 11px; }
.target { grid-area: target; padding-left: 18px; }
.environment { grid-area: environment; }
.gun { grid-area: gun; }
.solution { grid-area: solution; padding-left: 18px; }
.target legend, .solution legend, .card legend { margin-left: -14px; }

.rows { display: grid; grid-auto-rows: 1fr; }
.three { height: 114px; }
.four { height: 130px; }
.five { height: 162px; }
.five-tight { height: 160px; }
.row { display: flex; align-items: center; }
.row > :first-child { flex: 1; }
.row input[type="text"] { width: 92px; }
.opt { display: flex; align-items: center; gap: 9px; margin-right: 9px; }
.solution .opt { margin-right: 5px; }
.unit { width: 232px; padding-left: 6px; }
.gun .unit { width: 230px; }
.target .unit { width: 110px; }
.side { width: 183px; display: flex; gap: 5px; }
.side label { display: flex; gap: 9px; align-items: center; }
.note { padding-left: 20px; }
.environment .unit { width: 295px; padding-left: 56px; }
.drag label { width: 162px; display: flex; align-items: center; gap: 9px; color: #8a8a8a; }
.drag label:last-child { width: 160px; }

hr { width: 100%; height: 2px; margin: 8px 0; border: 0; background: #a8a8a8; }
.solution hr { margin: 4px 0 6px; }
.solution .four + hr + .three { margin-top: 8px; }
.wide { width: 100%; height: 31px; border: 1px solid #d0d0d0; border-radius: 5px; background: #fdfdfd; font-weight: 700; }
.actions { display: grid; grid-template-columns: repeat(4, 1fr); gap: 8px; padding: 9px 6px 0; }
.actions button { height: 51px; padding: 0; border: 1px solid #d0d0d0; border-radius: 6px; background: #fdfdfd; }
.actions span { display: inline-block; text-align: left; line-height: 20px; }
.environment hr { margin: 8px 0 11px; }

/* range card */
.card { margin-top: 17px; padding: 11px 1px 4px 18px; }
.card-body { display: flex; gap: 3px; }
.table-clip { flex: 1; max-height: 335px; overflow: hidden; background: #fff; }
table { width: 100%; table-layout: fixed; border-collapse: collapse; }
th { width: 163px; height: 27px; padding: 0 0 0 3px; border-right: 1px solid #dcdcdc; text-align: left; font-weight: 400; }
th:first-child { width: 161px; padding-left: 1px; }
th:nth-child(8) { border-right: 0; }
th:last-child { width: auto; border: 0; }
td { height: 31px; padding: 0 0 0 5px; }
td .mid { display: block; width: 35px; text-align: center; }
.selected { background: #3375d0; color: #fff; }
.scroll { width: 21px; display: flex; flex-direction: column; align-items: center; padding-top: 7px; background: #f0f0f0; }
.scroll i { width: 3px; height: 287px; margin-top: 6px; border-radius: 2px; background: #858585; }

.tabs { display: flex; align-items: flex-start; height: 39px; }
.tabs button { height: 28px; padding: 0 6px 5px; border: solid #dedede; border-width: 0 1px 1px 0; background: #f3f3f3; font-weight: 700; }
.tabs .active { height: 31px; padding: 0 8px 5px 11px; background: #f9f9f9; }
.status { height: 26px; border: solid #a0a0a0; border-width: 2px 0 1px 1px; }

.watermark { position: absolute; right: 86px; bottom: 49px; color: #b8b8b8; font-size: 19px; line-height: 30px; }
.watermark p { font-size: 26px; line-height: 32px; }

/* guest taskbar */
.taskbar {
  height: 64px;
  display: grid;
  grid-template-columns: 1fr auto 1fr;
  align-items: center;
  padding: 0 28px 0 26px;
  font-family: "Open Sans", "Noto Sans", sans-serif;
  font-size: 16px;
  line-height: 22px;
  color: #1c1c1c;
  background: linear-gradient(90deg, #e6eef8, #dfe7f8 18%, #d4def5 50%, #d5dcf1 62%, #dfe8f5 78%, #e3edf7);
}
.widget { display: flex; align-items: center; gap: 4px; }
.up { color: #3c7f2b; }
.pinned { display: flex; align-items: center; height: 100%; }
.pinned > .bare { height: 52px; margin-left: 27px; }
.pinned > .bare:first-child { margin-left: 0; }
.search { display: flex; align-items: center; width: 295px; height: 41px; margin: 0 -9px 0 19px; padding: 0 7px 0 15px; border-radius: 21px; background: #f3f6fd; box-shadow: 0 1px 2px #9aa3b8; font-size: 18px; }
.search input[type="text"] { flex: 1; padding: 0 0 0 14px; border: 0; background: none; text-align: left; }
.search input::placeholder { color: #5b5d62; }
.pinned > .current { width: 51px; margin: 0 -9px 0 18px; border-radius: 6px; background: #eef1fa; }
.current::after, .running::after { content: ""; position: absolute; bottom: 0; width: 22px; height: 4px; border-radius: 2px; background: #2f6fc4; }
.running::after { width: 8px; background: #85878c; }
.tray { display: flex; align-items: center; justify-content: flex-end; }
.sync { margin-left: 25px; }
.trio { display: flex; align-items: center; gap: 11px; margin: 0 22px 0 21px; }
.when { width: 75px; text-align: right; white-space: nowrap; margin-right: 12px; display: flex; flex-direction: column; align-items: flex-end; }
.behind { height: 4px; overflow: hidden; background: #77787a; color: #111; font-size: 20px; }
.behind b { display: block; margin: -13px 0 0 1650px; line-height: 24px; }

/* dock */
.dock {
  display: flex;
  align-items: center;
  justify-content: space-between;
  height: 80px;
  margin: 9px 53px 7px 54px;
  padding: 0 11px 6px 11px;
  border: 1px solid #85857d;
  border-radius: 22px;
  background: linear-gradient(90deg, #666a5a, #5e6059 20%, #605f59 50%, #746b57 66%, #6f6856 85%, #67624f);
}
.dock .bare { width: 48px; height: 48px; font-family: Inter, sans-serif; }
.dock .big { width: 56px; height: 56px; margin: 0 -4px; }
.dock svg { width: 100%; height: 100%; overflow: visible; }
.dock i { position: absolute; top: 60px; width: 5px; height: 5px; border-radius: 50%; background: #000; }
.dock .big i { top: 64px; }
.dock hr { width: 1px; height: 58px; margin: 0 5px; background: #46443a; }
.badge { position: absolute; top: -6px; right: -9px; width: 23px; height: 23px; border-radius: 50%; background: #e04a3c; color: #fff; font-size: 14px; line-height: 23px; }
</style>
